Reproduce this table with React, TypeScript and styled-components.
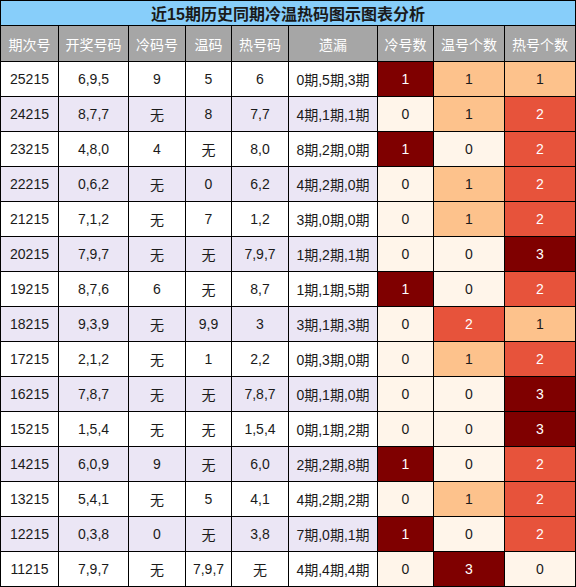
import styled, { createGlobalStyle } from "styled-components";

const GlobalStyle = createGlobalStyle`
  html, body {
    margin: 0;
    padding: 0;
    background: #ffffff;
  }
  body {
    font-family: "Liberation Sans", "Noto Sans CJK SC", sans-serif;
  }
`;

// 每列宽度（不含 1px 网格线）
const COLUMNS = "57px 69px 56px 45px 56px 88px 55px 70px 70px";

const HEADERS = ["期次号", "开奖号码", "冷码号", "温码", "热号码", "遗漏", "冷号数", "温号个数", "热号个数"];

type RowData = [string, string, string, string, string, string, number, number, number];

const ROWS: RowData[] = [
  ["25215", "6,9,5", "9", "5", "6", "0期,5期,3期", 1, 1, 1],
  ["24215", "8,7,7", "无", "8", "7,7", "4期,1期,1期", 0, 1, 2],
  ["23215", "4,8,0", "4", "无", "8,0", "8期,2期,0期", 1, 0, 2],
  ["22215", "0,6,2", "无", "0", "6,2", "4期,2期,0期", 0, 1, 2],
  ["21215", "7,1,2", "无", "7", "1,2", "3期,0期,0期", 0, 1, 2],
  ["20215", "7,9,7", "无", "无", "7,9,7", "1期,2期,1期", 0, 0, 3],
  ["19215", "8,7,6", "6", "无", "8,7", "1期,1期,5期", 1, 0, 2],
  ["18215", "9,3,9", "无", "9,9", "3", "3期,1期,3期", 0, 2, 1],
  ["17215", "2,1,2", "无", "1", "2,2", "0期,3期,0期", 0, 1, 2],
  ["16215", "7,8,7", "无", "无", "7,8,7", "0期,1期,0期", 0, 0, 3],
  ["15215", "1,5,4", "无", "无", "1,5,4", "0期,1期,2期", 0, 0, 3],
  ["14215", "6,0,9", "9", "无", "6,0", "2期,2期,8期", 1, 0, 2],
  ["13215", "5,4,1", "无", "5", "4,1", "4期,2期,2期", 0, 1, 2],
  ["12215", "0,3,8", "0", "无", "3,8", "7期,0期,1期", 1, 0, 2],
  ["11215", "7,9,7", "无", "7,9,7", "无", "4期,4期,4期", 0, 3, 0],
];

// 热度色阶：按列最大值取色
const HEAT = ["#fff5ea", "#fdc28c", "#e7533b", "#7f0000"];

function heatLevel(value: number, max: number) {
  if (value === 0 || max === 0) return 0;
  if (value >= max) return 3;
  return Math.round((value / max) * 3);
}

function ChartTable() {
  const maxCold = Math.max(...ROWS.map((r) => r[6]));
  const maxWarm = Math.max(...ROWS.map((r) => r[7]));
  const maxHot = Math.max(...ROWS.map((r) => r[8]));
  const maxes = [maxCold, maxWarm, maxHot];

  return (
    <Frame>
      <Title>近15期历史同期冷温热码图示图表分析</Title>
      <Row>
        {HEADERS.map((h) => (
          <HeadCell key={h}>{h}</HeadCell>
        ))}
      </Row>
      {ROWS.map((row, i) => (
        <Row key={row[0]}>
          {row.slice(0, 6).map((v, j) => (
            <Cell key={j} $striped={i % 2 === 1}>
              {v}
            </Cell>
          ))}
          {row.slice(6).map((v, j) => {
            const level = heatLevel(v as number, maxes[j]);
            return (
              <HeatCell key={j} $level={level}>
                {v}
              </HeatCell>
            );
          })}
        </Row>
      ))}
    </Frame>
  );
}

export default function App() {
  return (
    <>
      <GlobalStyle />
      <ChartTable />
    </>
  );
}

const Frame = styled.div`
  display: flex;
  flex-direction: column;
  gap: 1px;
  width: 576px;
  padding: 1px;
  box-sizing: border-box;
  background: #000000;
`;

const Title = styled.div`
  display: flex;
  align-items: center;
  justify-content: center;
  height: 24px;
  background: #87cefa;
  color: #1a1a1a;
  font-size: 16px;
  font-weight: bold;
`;

const Row = styled.div`
  display: grid;
  grid-template-columns: ${COLUMNS};
  gap: 1px;
`;

const BaseCell = styled.div`
  display: flex;
  align-items: center;
  justify-content: center;
  height: 34px;
  font-size: 14px;
  white-space: nowrap;
`;

const HeadCell = styled(BaseCell)`
  height: 35px;
  background: #a6a6a6;
  color: #ffffff;
  font-size: 14px;
`;

const Cell = styled(BaseCell)<{ $striped: boolean }>`
  background: ${(p) => (p.$striped ? "#ebe6f5" : "#ffffff")};
  color: #1a1a1a;
`;

const HeatCell = styled(BaseCell)<{ $level: number }>`
  background: ${(p) => HEAT[p.$level]};
  color: ${(p) => (p.$level >= 2 ? "#ffffff" : "#1a1a1a")};
`;
